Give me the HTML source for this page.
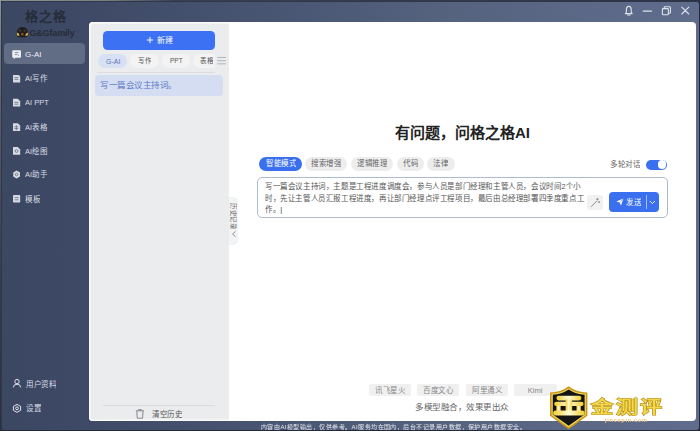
<!DOCTYPE html>
<html lang="zh-CN"><head><meta charset="utf-8">
<style>
*{margin:0;padding:0;box-sizing:border-box}
html,body{width:700px;height:431px;overflow:hidden;background:#2a3142;font-family:"Liberation Sans",sans-serif}
.a{position:absolute}
#win{position:absolute;left:0;top:0;width:700px;height:431px;
 background:linear-gradient(90deg,#3c4762 0%,#3e4a66 14%,#4b5875 44%,#56637f 64%,#5f6c8c 100%);}
#frame{position:absolute;left:0;top:0;width:700px;height:431px;border-right:1px solid #232a38;border-bottom:1px solid #232a38}
#frame2{position:absolute;left:1px;top:1px;width:698px;height:429px;border-radius:3px;box-shadow:0 0 0 3px #2a3244;border-top:0.6px solid #2e384c;border-left:0.6px solid #2e384c}
.side-item{position:absolute;left:4px;width:81px;height:21px;border-radius:4px;color:#e9ecf2;font-size:8px}
.tx{white-space:nowrap;font-size:8px;line-height:11px}
.wm{left:591px;top:396.5px;font-size:22px;line-height:28px;font-weight:bold;letter-spacing:2.6px;white-space:nowrap;transform:scaleY(0.78);transform-origin:0 0}
.s2{transform:scale(.5);transform-origin:0 0;white-space:nowrap}
#panel{position:absolute;left:89px;top:21.5px;width:141px;height:399.5px;background:#ebecee;border-radius:4px 0 0 4px;box-shadow:inset 1.5px 1.5px 0 #fbfbfc,inset 0 -1.5px 0 #fbfbfc}
#main{position:absolute;left:229px;top:21.5px;width:467px;height:399.5px;background:#fff;border-radius:0 4px 4px 0}
.tab{position:absolute;top:0;height:14px;border-radius:7px;background:#f3f3f4}
.pill{position:absolute;top:135.1px;height:14.3px;border-radius:7.2px}
.chip{position:absolute;top:362.1px;height:12px;width:42.3px;border-radius:2px;background:#f0f0f1}
body>*{filter:blur(0.25px)}
</style></head><body>
<div id="win">
 <!-- logo -->
 <div class="a" style="left:25px;top:8px;font-size:13px;color:#262c3a;font-weight:bold;letter-spacing:0.8px;line-height:18px">格之格</div>
 <svg class="a" style="left:0;top:0" width="40" height="40" viewBox="0 0 40 40">
  <path d="M16.6 35.2 Q16.4 27 22.4 27 Q28.4 27 28.2 35.2 Q28 37.4 22.4 37.4 Q16.8 37.4 16.6 35.2z" fill="#231f1e"/>
  <path d="M17 32.6 q1.6 0.2 2.6 2.8 q-1.6 0.6-2.8-0.2z" fill="#d9b85a"/>
  <path d="M27.8 32.6 q-1.6 0.2-2.6 2.8 q1.6 0.6 2.8-0.2z" fill="#d9b85a"/>
  <path d="M21 33.2 h2.8 l-0.4 2 h-2z" fill="#8a5a33"/>
  <path d="M19 30.8 h2 M23.8 30.8 h2" stroke="#6a5a4a" stroke-width="0.8"/>
 </svg>
 <div class="a" style="left:29.4px;top:26.6px;font-size:9px;font-weight:bold;color:#262b36;line-height:12px;letter-spacing:-0.15px">G&amp;Gfamily</div>

 <div class="side-item" style="top:43.1px;height:21.2px;background:#616c85"></div>
 <svg class="a" style="left:0;top:0" width="90" height="420" viewBox="0 0 90 420">
  <g fill="#eceef3">
   <path d="M13.2 50.2 h6.8 q1 0 1 1 v5.6 q0 1-1 1 h-4.6 l-1.6 1.4 v-1.4 h-0.6 q-1 0-1-1 v-5.6 q0-1 1-1z"/>
   <path d="M13 74.9 h5.6 l1.6 1.6 v6.1 h-7.2z" opacity="0.88"/>
   <path d="M13 98.8 h4.8 l2.4 2.4 v5.3 h-7.2z" opacity="0.88"/>
   <path d="M13 123.2 h4.8 l2.4 2.4 v5.3 h-7.2z" opacity="0.88"/>
   <path d="M13 147 h4.8 l2.4 2.4 v5.3 h-7.2z" opacity="0.88"/>
   <path d="M16.6 170.6 l3.4 2 v3.9 l-3.4 2 l-3.4-2 v-3.9z" opacity="0.88"/>
   <rect x="13" y="195" width="7.2" height="7.6" rx="0.8" opacity="0.88"/>
  </g>
  <g fill="none" stroke="#5a6480" stroke-width="0.7">
   <path d="M14.8 52.6 h3.6 M14.8 54.6 h2.4 M17.8 54.6 l1 1.2"/>
   <path d="M14.4 77.6 h4 M14.4 79.4 h4"/>
   <path d="M14.4 102.4 h4 M14.4 104.2 h4"/>
   <path d="M14.4 126.8 h4 M14.4 128.6 h4 M16.4 125.2 v5"/>
   <circle cx="16.6" cy="151" r="1.4"/>
   <circle cx="16.6" cy="174.5" r="1.3"/>
   <path d="M14.6 197.6 h4 M14.6 199.8 h4"/>
  </g>
  <g fill="none" stroke="#e2e5ec" stroke-width="1">
   <circle cx="17" cy="381.6" r="2.2"/>
   <path d="M13.4 387.4 q0-3.2 3.6-3.2 q3.6 0 3.6 3.2"/>
   <path d="M17 404.4 l3.6 2 v3.9 l-3.6 2 l-3.6-2 v-3.9z"/>
   <circle cx="17" cy="408.3" r="1.4"/>
  </g>
 </svg>
 <div class="tx a" style="left:25px;top:48.5px;font-size:8px;line-height:11px;color:#eef0f5">G-AI</div>
 <div class="a s2" style="left:25px;top:73.0px;font-size:15px;line-height:22px;color:#d9dde5">AI写作</div>
 <div class="a s2" style="left:25px;top:97.39999999999999px;font-size:15px;line-height:22px;color:#d9dde5">AI PPT</div>
 <div class="a s2" style="left:25px;top:121.89999999999999px;font-size:15px;line-height:22px;color:#d9dde5">AI表格</div>
 <div class="a s2" style="left:25px;top:145.70000000000002px;font-size:15px;line-height:22px;color:#d9dde5">AI绘图</div>
 <div class="a s2" style="left:25px;top:169.3px;font-size:15px;line-height:22px;color:#d9dde5">AI助手</div>
 <div class="a s2" style="left:25px;top:193.60000000000002px;font-size:15px;line-height:22px;color:#d9dde5">模板</div>
 <div class="a s2" style="left:25.6px;top:378.5px;font-size:15px;line-height:22px;color:#d9dde5">用户资料</div>
 <div class="a s2" style="left:25.6px;top:403.0px;font-size:15px;line-height:22px;color:#d9dde5">设置</div>

 <!-- title bar icons -->
 <svg class="a" style="left:0;top:0" width="700" height="22" viewBox="0 0 700 22">
  <g fill="none" stroke="#dfe3ec" stroke-width="1.1" stroke-linecap="round" stroke-linejoin="round">
   <path d="M625.4 13.6 L626.4 12.2 L626.4 9.4 Q626.4 6.4 628.8 6.4 Q631.2 6.4 631.2 9.4 L631.2 12.2 L632.2 13.6 Z"/>
   <path d="M627.6 15 L630 15"/>
   <path d="M643.3 11.1 L651.5 11.1" stroke-width="1.3"/>
   <rect x="662.4" y="8.6" width="6" height="6.2" rx="0.8"/>
   <path d="M664.2 8.4 L664.2 7.6 Q664.2 6.8 665 6.8 L669.6 6.8 Q670.4 6.8 670.4 7.6 L670.4 12.4 Q670.4 13.2 669.6 13.2 L668.6 13.2"/>
   <path d="M681.8 7.2 L688.8 14 M688.8 7.2 L681.8 14"/>
  </g>
 </svg>

 <div id="panel">
  <div class="a" style="left:14.3px;top:9.2px;width:111.6px;height:19px;border-radius:4.5px;background:#3b71f2"></div>
  <svg class="a" style="left:57.3px;top:14.5px" width="8" height="8" viewBox="0 0 8 8"><path d="M4 0.9 V7.1 M0.9 4 H7.1" stroke="#fff" stroke-width="1"/></svg>
  <div class="a s2" style="left:67.6px;top:13.2px;font-size:16px;line-height:22px;color:#fff">新建</div>
  <div class="a" style="left:8.8px;top:32.5px;width:117.2px;height:14px;overflow:hidden">
   <div class="tab" style="left:0;width:29.7px;background:#d8e0f4"></div>
   <div class="tab" style="left:32.7px;width:29px"></div>
   <div class="tab" style="left:64.2px;width:28px"></div>
   <div class="tab" style="left:95.7px;width:40px"></div>
  </div>
  <div class="a s2" style="left:16.5px;top:34.2px;font-size:14px;line-height:20px;color:#5d77b8">G-AI</div>
  <div class="a s2" style="left:48.8px;top:34.2px;font-size:13px;line-height:20px;color:#555">写作</div>
  <div class="a s2" style="left:81.3px;top:34.2px;font-size:13px;line-height:20px;color:#555">PPT</div>
  <div class="a s2" style="left:111.3px;top:34.2px;font-size:13px;line-height:20px;color:#555">表格</div>
  <svg class="a" style="left:127.7px;top:34px" width="10" height="10" viewBox="0 0 10 10"><path d="M0.2 1.5 H9 M0.2 4.7 H9 M0.2 7.8 H9" stroke="#a3a7ad" stroke-width="0.8"/></svg>
  <div class="a" style="left:8px;top:50.6px;width:118px;height:1px;background:#dcdde0"></div>
  <div class="a" style="left:6.2px;top:53.1px;width:128.3px;height:21.2px;border-radius:4px;background:#d5ddf2"></div>
  <div class="a s2" style="left:11.2px;top:58.6px;font-size:17px;line-height:20px;color:#5a7bc8">写一篇会议主持词。</div>
  <div class="a" style="left:13.8px;top:383.8px;width:112px;height:1px;background:#dadbde"></div>
  <svg class="a" style="left:46px;top:387.5px" width="10" height="10" viewBox="0 0 10 10"><g fill="none" stroke="#7a7d82" stroke-width="0.9"><path d="M0.8 1.8 H9 M3.4 1.6 V0.7 H6.4 V1.6 M1.8 2.2 L2.2 9.2 H7.6 L8 2.2"/></g></svg>
  <div class="a s2" style="left:63px;top:387.2px;font-size:15px;line-height:20px;color:#555">清空历史</div>
 </div>

 <div id="main">
  <div class="a" style="left:0px;top:176.2px;width:7.6px;height:46px;border-radius:0 4px 4px 0;background:#f3f4f5;box-shadow:0.5px 0 0 #e4e5e8,0 0.5px 0 #e4e5e8,0 -0.5px 0 #e4e5e8"></div>
  <div class="a" style="left:7.2px;top:181.3px;width:30px;transform:rotate(90deg);transform-origin:0 0"><div class="s2" style="font-size:13px;line-height:14px;color:#666">历史记录</div></div>
  <svg class="a" style="left:0.5px;top:208.5px" width="8" height="8" viewBox="0 0 8 8"><path d="M5.6 1.2 L2.6 4 L5.6 6.8" fill="none" stroke="#777" stroke-width="0.8"/></svg>
  <div class="a" style="left:166px;top:103px;font-size:15px;font-weight:bold;color:#222;line-height:16px;white-space:nowrap">有问题，问格之格AI</div>
  <div class="pill" style="left:29.6px;width:43.5px;background:#3a6ff0"></div>
  <div class="a s2" style="left:36.7px;top:136.9px;font-size:15px;line-height:20px;color:#fff">智能模式</div>
  <div class="pill" style="left:76px;width:42.1px;background:#ededee"></div>
  <div class="a s2" style="left:82.4px;top:136.9px;font-size:15px;line-height:20px;color:#666">搜索增强</div>
  <div class="pill" style="left:122px;width:42.4px;background:#ededee"></div>
  <div class="a s2" style="left:128px;top:136.9px;font-size:15px;line-height:20px;color:#666">逻辑推理</div>
  <div class="pill" style="left:167.5px;width:27.4px;background:#ededee"></div>
  <div class="a s2" style="left:173.5px;top:136.9px;font-size:15px;line-height:20px;color:#666">代码</div>
  <div class="pill" style="left:198.3px;width:27.5px;background:#ededee"></div>
  <div class="a s2" style="left:204.3px;top:136.9px;font-size:15px;line-height:20px;color:#666">法律</div>
  <div class="a s2" style="left:381.2px;top:137.7px;font-size:15px;line-height:20px;color:#666">多轮对话</div>
  <div class="a" style="left:417.3px;top:138.1px;width:21.2px;height:10px;border-radius:5px;background:#3a6ff0"><div class="a" style="left:11.4px;top:0.6px;width:8.8px;height:8.8px;border-radius:4.4px;background:#fff"></div></div>
  <div class="a" style="left:28.1px;top:155.9px;width:410.6px;height:40.6px;border-radius:5px;border:1px solid #abbdcc"></div>
  <div class="a s2" style="left:36.2px;top:158.4px;font-size:15px;line-height:23.6px;color:#555;letter-spacing:0.2px">写一篇会议主持词，主题是工程进度调度会，参与人员是部门经理和主管人员，会议时间2个小<br>时，先让主管人员汇报工程进度，再让部门经理点评工程项目，最后由总经理部署四季度重点工<br>作。<span style="color:#333">|</span></div>
  <div class="a" style="left:358.1px;top:173.1px;width:15.8px;height:15.5px;border-radius:3px;background:#f1f1f2"></div>
  <svg class="a" style="left:358.1px;top:173.1px" width="16" height="16" viewBox="0 0 16 16"><g stroke="#8a8c90" stroke-width="1" fill="none" stroke-linecap="round"><path d="M4.2 11.6 L9.6 6.2"/><path d="M10.4 3.4 V5 M9.6 4.2 H11.2 M12 6.6 V7.6 M11.5 7.1 H12.5"/></g></svg>
  <div class="a" style="left:379.5px;top:170.6px;width:50.2px;height:19.9px;border-radius:4px;background:#3a6ff0"></div>
  <svg class="a" style="left:386.5px;top:176.7px" width="8" height="8" viewBox="0 0 8 8"><path d="M0.3 3.6 L7.4 0.4 L5 7.4 L3.6 4.6z" fill="#fff"/><path d="M3.6 4.6 L7.4 0.4" stroke="#3a6ff0" stroke-width="0.5"/></svg>
  <div class="a s2" style="left:397.2px;top:175.1px;font-size:15px;line-height:20px;color:#fff">发送</div>
  <div class="a" style="left:416.5px;top:173.8px;width:0.8px;height:13.5px;background:#a6bdf6"></div>
  <svg class="a" style="left:419.8px;top:177.0px" width="7" height="7" viewBox="0 0 7 7"><path d="M0.8 2 L3.4 4.6 L6 2" fill="none" stroke="#fff" stroke-width="0.9"/></svg>
  <div class="chip" style="left:139.6px"><div class="s2" style="position:absolute;left:0;top:1px;width:84.6px;text-align:center;font-size:15px;line-height:20px;color:#888">讯飞星火</div></div>
  <div class="chip" style="left:188.1px"><div class="s2" style="position:absolute;left:0;top:1px;width:84.6px;text-align:center;font-size:15px;line-height:20px;color:#888">百度文心</div></div>
  <div class="chip" style="left:236.7px"><div class="s2" style="position:absolute;left:0;top:1px;width:84.6px;text-align:center;font-size:15px;line-height:20px;color:#888">阿里通义</div></div>
  <div class="chip" style="left:285.3px"><div class="s2" style="position:absolute;left:0;top:1px;width:84.6px;text-align:center;font-size:15px;line-height:20px;color:#888">Kimi</div></div>
  <div class="a s2" style="left:185.6px;top:380.0px;font-size:17px;line-height:22px;color:#666">多模型融合，效果更出众</div>
 </div>

 <div class="a s2" style="left:260.5px;top:421.5px;font-size:12px;line-height:20px;color:#e6e9ef;letter-spacing:0.92px">内容由AI模型输出，仅供参考。AI服务均在国内，后台不记录用户数据，保护用户数据安全。</div>
 <svg class="a" style="left:0;top:0" width="700" height="431" viewBox="0 0 700 431">
  <defs>
   <linearGradient id="gold" x1="0" y1="0" x2="0" y2="1"><stop offset="0" stop-color="#fff2a0"/><stop offset="0.45" stop-color="#f2d030"/><stop offset="1" stop-color="#b88a10"/></linearGradient>
   <linearGradient id="gold2" x1="0" y1="0" x2="1" y2="0"><stop offset="0" stop-color="#f0cc30"/><stop offset="0.5" stop-color="#fffbd8"/><stop offset="1" stop-color="#f0cc30"/></linearGradient>
  </defs>
  <path d="M568.7 386.3 Q576 392 587.4 392.6 L587.4 415.8 L568.7 429.2 L550 415.8 L550 392.6 Q561.4 392 568.7 386.3 Z" fill="#c99a1a"/>
  <path d="M568.7 388.2 Q576 393.4 585.8 393.8 L585.8 415 L568.7 427.3 L551.6 415 L551.6 393.8 Q561.4 393.4 568.7 388.2 Z" fill="#f3d860"/>
  <path d="M568.7 389.6 Q576 394.4 584.6 394.8 L584.6 414.4 L568.7 425.8 L552.8 414.4 L552.8 394.8 Q561.4 394.4 568.7 389.6 Z" fill="#141414"/>
  <g fill="url(#gold2)">
   <rect x="556.4" y="395.8" width="25" height="4.6" rx="2.3"/>
   <rect x="554.2" y="401.8" width="29.4" height="4.2" rx="2.1"/>
   <rect x="565.6" y="399.5" width="6.6" height="13"/>
   <rect x="556.4" y="406" width="4.3" height="5.5"/>
   <rect x="576.5" y="406" width="4.3" height="5.5"/>
   <rect x="553.1" y="410.6" width="31.6" height="5" rx="2.5"/>
  </g>
 </svg>
 <div class="a wm" style="color:#a07a10;-webkit-text-stroke:1.4px #b08a18">金测评</div>
 <div class="a wm" style="color:#f4d84a">金测评</div>
 <div class="a s2" style="left:605px;top:415.6px;font-size:11px;line-height:14px;color:#f3c27a;letter-spacing:1.5px;font-weight:bold">jincepin.com</div>
</div>
<div id="frame2"></div><div id="frame"></div><div class="a" style="left:0;top:0;width:700px;height:1px;background:linear-gradient(90deg,#8c9193 0%,#7a7f84 15%,#3a4050 25%,#2c3344 100%)"></div><div class="a" style="left:0;top:0;width:1px;height:431px;background:linear-gradient(180deg,#8c9193 0%,#5a5f66 25%,#3a3f4b 60%,#2a2f3a 100%)"></div>
</body></html>
